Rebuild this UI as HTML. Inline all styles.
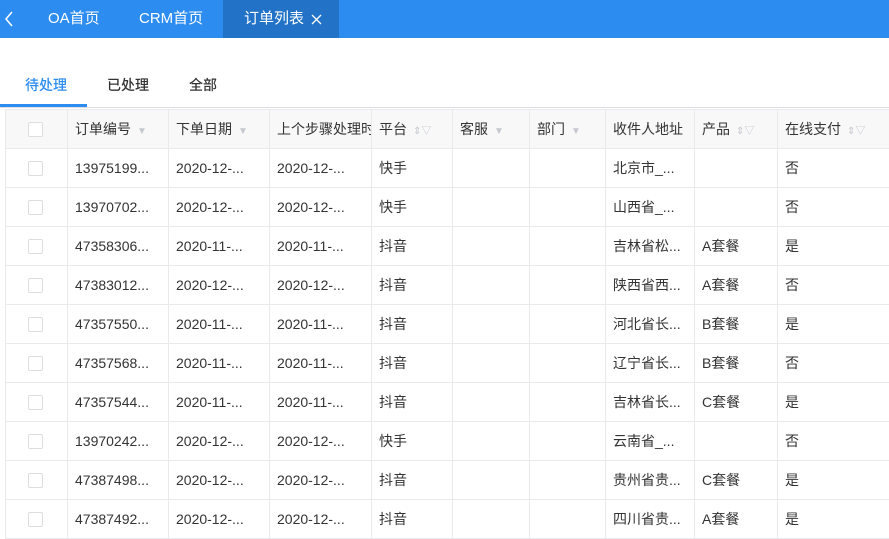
<!DOCTYPE html>
<html><head><meta charset="utf-8"><style>
*{margin:0;padding:0;box-sizing:border-box}
body{width:889px;height:538px;overflow:hidden;background:#fff;font-family:"Liberation Sans","Noto Sans CJK SC",sans-serif;color:#515a6e;font-size:14px;position:relative}
.top{position:absolute;left:0;top:0;width:889px;height:38px;background:#2d8cf0;color:#fff;font-size:15px}
.top span{position:absolute;top:0;line-height:38px}
.act{position:absolute;left:223px;top:0;width:116px;height:38px;background:#2272c7}
.sub{position:absolute;top:75px;font-size:14px;color:#333;font-weight:500}
.ul{position:absolute;left:0;top:104px;width:87px;height:3px;background:#2d8cf0}
.line{position:absolute;left:0;top:107px;width:889px;height:1px;background:#dcdee2}
table{position:absolute;left:5px;top:109px;border-collapse:collapse;table-layout:fixed;width:890px}
td,th{height:39px;border:1px solid #e8eaec;padding:0 7px;white-space:nowrap;overflow:hidden;text-align:left;font-weight:normal;font-size:14px;color:#333}
th{background:#f8f8f9;color:#333}
.cb{display:inline-block;width:15px;height:15px;border:1px solid #dcdee2;border-radius:2px;background:#fff;margin-left:15px;vertical-align:middle}
.ic{color:#c5c8ce;font-size:10px;margin-left:6px}
</style></head><body>
<div class="top">
<svg style="position:absolute;left:4px;top:11px" width="10" height="16" viewBox="0 0 10 16"><path d="M8 1L2 8l6 7" fill="none" stroke="#fff" stroke-width="1.5"/></svg>
<span style="left:48px">OA首页</span>
<span style="left:139px">CRM首页</span>
<div class="act"></div>
<span style="left:244px">订单列表</span>
<svg style="position:absolute;left:311px;top:14px" width="11" height="11" viewBox="0 0 11 11"><path d="M1 1l9 9M10 1l-9 9" stroke="#fff" stroke-width="1.3"/></svg>
</div>
<div class="sub" style="left:25px;color:#2d8cf0">待处理</div>
<div class="sub" style="left:107px">已处理</div>
<div class="sub" style="left:189px">全部</div>
<div class="ul"></div><div class="line"></div>
<table>
<colgroup><col style="width:62px"><col style="width:101px"><col style="width:101px"><col style="width:102px"><col style="width:81px"><col style="width:77px"><col style="width:76px"><col style="width:89px"><col style="width:83px"><col style="width:118px"></colgroup>
<tr><th><span class="cb"></span></th><th>订单编号<span class="ic">▼</span></th><th>下单日期<span class="ic">▼</span></th><th>上个步骤处理时</th><th>平台<span class="ic">⇕▽</span></th><th>客服<span class="ic">▼</span></th><th>部门<span class="ic">▼</span></th><th>收件人地址</th><th>产品<span class="ic">⇕▽</span></th><th>在线支付<span class="ic">⇕▽</span></th></tr>
<tr><td><span class="cb"></span></td><td>13975199...</td><td>2020-12-...</td><td>2020-12-...</td><td>快手</td><td></td><td></td><td>北京市_...</td><td></td><td>否</td></tr>
<tr><td><span class="cb"></span></td><td>13970702...</td><td>2020-12-...</td><td>2020-12-...</td><td>快手</td><td></td><td></td><td>山西省_...</td><td></td><td>否</td></tr>
<tr><td><span class="cb"></span></td><td>47358306...</td><td>2020-11-...</td><td>2020-11-...</td><td>抖音</td><td></td><td></td><td>吉林省松...</td><td>A套餐</td><td>是</td></tr>
<tr><td><span class="cb"></span></td><td>47383012...</td><td>2020-12-...</td><td>2020-12-...</td><td>抖音</td><td></td><td></td><td>陕西省西...</td><td>A套餐</td><td>否</td></tr>
<tr><td><span class="cb"></span></td><td>47357550...</td><td>2020-11-...</td><td>2020-11-...</td><td>抖音</td><td></td><td></td><td>河北省长...</td><td>B套餐</td><td>是</td></tr>
<tr><td><span class="cb"></span></td><td>47357568...</td><td>2020-11-...</td><td>2020-11-...</td><td>抖音</td><td></td><td></td><td>辽宁省长...</td><td>B套餐</td><td>否</td></tr>
<tr><td><span class="cb"></span></td><td>47357544...</td><td>2020-11-...</td><td>2020-11-...</td><td>抖音</td><td></td><td></td><td>吉林省长...</td><td>C套餐</td><td>是</td></tr>
<tr><td><span class="cb"></span></td><td>13970242...</td><td>2020-12-...</td><td>2020-12-...</td><td>快手</td><td></td><td></td><td>云南省_...</td><td></td><td>否</td></tr>
<tr><td><span class="cb"></span></td><td>47387498...</td><td>2020-12-...</td><td>2020-12-...</td><td>抖音</td><td></td><td></td><td>贵州省贵...</td><td>C套餐</td><td>是</td></tr>
<tr><td><span class="cb"></span></td><td>47387492...</td><td>2020-12-...</td><td>2020-12-...</td><td>抖音</td><td></td><td></td><td>四川省贵...</td><td>A套餐</td><td>是</td></tr>
</table>
</body></html>
